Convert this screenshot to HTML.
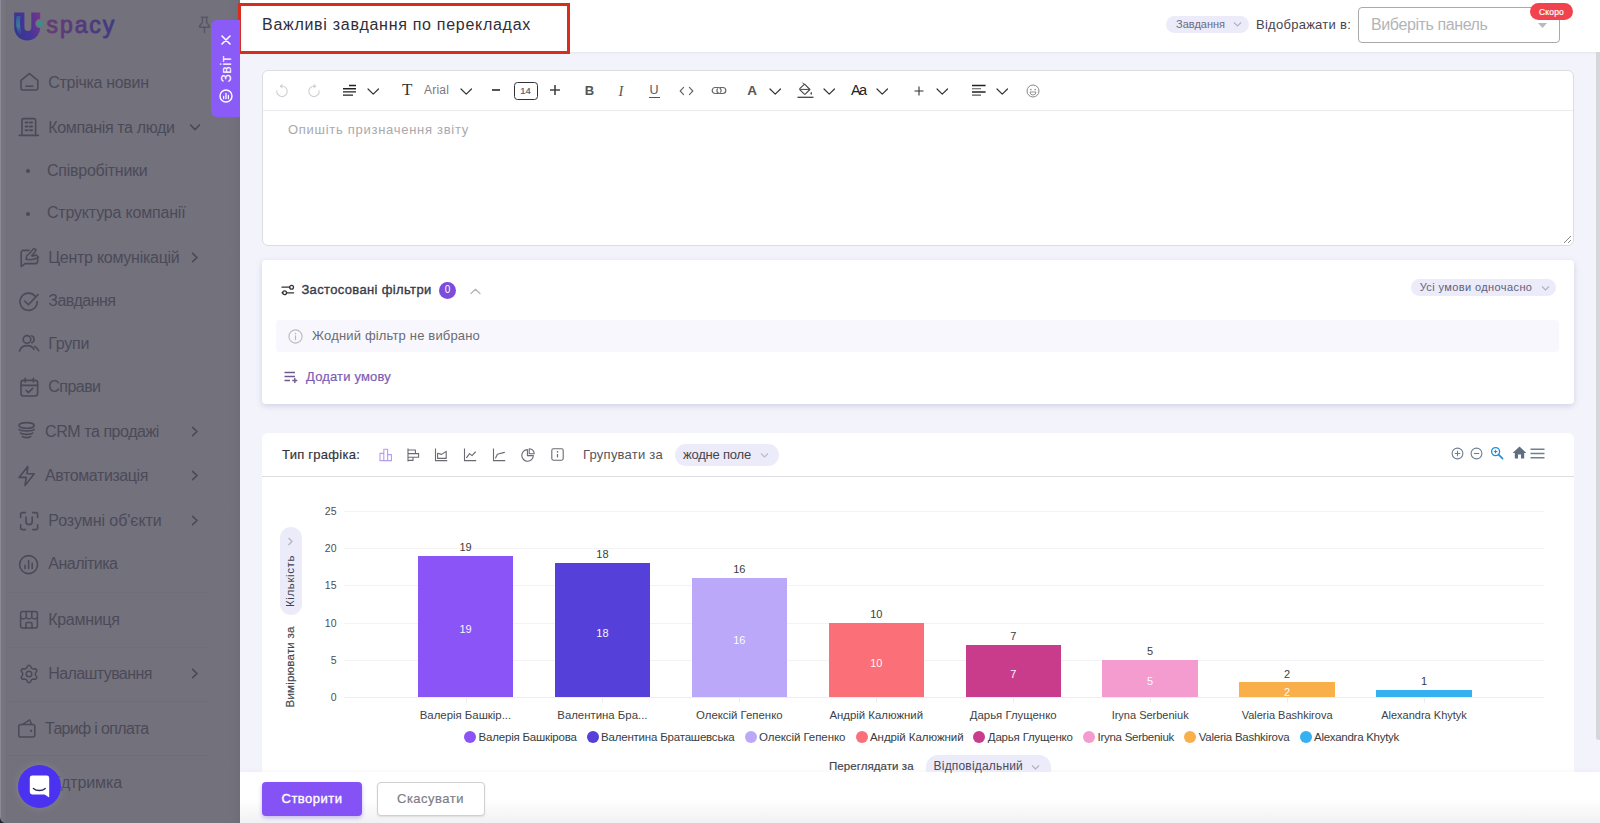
<!DOCTYPE html>
<html lang="uk"><head><meta charset="utf-8"><title>Uspacy</title>
<style>
html,body{margin:0;padding:0;}
body{width:1600px;height:823px;overflow:hidden;position:relative;background:#f3f4fb;font-family:"Liberation Sans",sans-serif;}
.b{position:absolute;box-sizing:border-box;}
.t{position:absolute;white-space:nowrap;}
</style></head><body>
<div class="b" style="left:240px;top:0px;width:1360px;height:52px;background:#fff;box-shadow:0 1px 2px rgba(120,120,150,.12);"></div>
<div class="b" style="left:1595.5px;top:52px;width:6px;height:688px;background:#d6d6da;border-radius:0 0 0 3px;"></div>
<div class="b" style="left:262px;top:70px;width:1312px;height:176px;background:#fff;border:1px solid #dcdde3;border-radius:6px;"></div>
<div class="b" style="left:263px;top:110px;width:1310px;height:1px;background:#ececf0;"></div>
<div class="b" style="left:262px;top:260px;width:1312px;height:144px;background:#fff;border-radius:4px;box-shadow:0 2px 6px rgba(110,110,150,.26);"></div>
<div class="b" style="left:276px;top:320px;width:1283px;height:32px;background:#f7f7fd;border-radius:4px;"></div>
<div class="b" style="left:262px;top:433px;width:1312px;height:360px;background:#fff;border-radius:6px;"></div>
<div class="b" style="left:262px;top:476px;width:1312px;height:1px;background:#dddde2;"></div>
<div class="b" style="left:240px;top:772px;width:1360px;height:51px;background:linear-gradient(#fff 0,#fff 55%,#f1f1f3 100%);box-shadow:0 -1px 4px rgba(100,100,130,.06);"></div>
<div class="b" style="left:0px;top:0px;width:240px;height:823px;background:#73717c;"></div>
<div class="b" style="left:229px;top:0px;width:11px;height:823px;background:linear-gradient(90deg,rgba(60,58,80,0),rgba(60,58,80,.08));"></div>
<div class="b" style="left:9px;top:592px;width:199px;height:1px;background:#6f6d78;"></div>
<div class="b" style="left:9px;top:647px;width:199px;height:1px;background:#6f6d78;"></div>
<div class="b" style="left:9px;top:701px;width:199px;height:1px;background:#6f6d78;"></div>
<div class="b" style="left:9px;top:755px;width:199px;height:1px;background:#6f6d78;"></div>
<div class="t" style="left:48.25px;top:71.50px;font-size:16px;line-height:22px;font-weight:400;color:#4b4a58;letter-spacing:-0.298px;">Стрічка новин</div>
<div class="t" style="left:48.25px;top:116.50px;font-size:16px;line-height:22px;font-weight:400;color:#4b4a58;letter-spacing:-0.361px;">Компанія та люди</div>
<div class="t" style="left:47.00px;top:159.50px;font-size:16px;line-height:22px;font-weight:400;color:#4b4a58;letter-spacing:-0.256px;">Співробітники</div>
<div class="t" style="left:47.00px;top:202.00px;font-size:16px;line-height:22px;font-weight:400;color:#4b4a58;letter-spacing:-0.185px;">Структура компанії</div>
<div class="t" style="left:48.25px;top:247.00px;font-size:16px;line-height:22px;font-weight:400;color:#4b4a58;letter-spacing:-0.268px;">Центр комунікацій</div>
<div class="t" style="left:48.25px;top:290.00px;font-size:16px;line-height:22px;font-weight:400;color:#4b4a58;letter-spacing:-0.525px;">Завдання</div>
<div class="t" style="left:48.25px;top:332.50px;font-size:16px;line-height:22px;font-weight:400;color:#4b4a58;letter-spacing:-0.217px;">Групи</div>
<div class="t" style="left:48.25px;top:375.50px;font-size:16px;line-height:22px;font-weight:400;color:#4b4a58;letter-spacing:-0.534px;">Справи</div>
<div class="t" style="left:45.00px;top:420.50px;font-size:16px;line-height:22px;font-weight:400;color:#4b4a58;letter-spacing:-0.427px;">CRM та продажі</div>
<div class="t" style="left:45.00px;top:465.25px;font-size:16px;line-height:22px;font-weight:400;color:#4b4a58;letter-spacing:-0.407px;">Автоматизація</div>
<div class="t" style="left:48.25px;top:510.00px;font-size:16px;line-height:22px;font-weight:400;color:#4b4a58;letter-spacing:-0.048px;">Розумні об&#x27;єкти</div>
<div class="t" style="left:48.25px;top:553.25px;font-size:16px;line-height:22px;font-weight:400;color:#4b4a58;letter-spacing:-0.507px;">Аналітика</div>
<div class="t" style="left:48.25px;top:609.00px;font-size:16px;line-height:22px;font-weight:400;color:#4b4a58;letter-spacing:-0.309px;">Крамниця</div>
<div class="t" style="left:48.25px;top:663.00px;font-size:16px;line-height:22px;font-weight:400;color:#4b4a58;letter-spacing:-0.591px;">Налаштування</div>
<div class="t" style="left:45.00px;top:717.50px;font-size:16px;line-height:22px;font-weight:400;color:#4b4a58;letter-spacing:-0.671px;">Тариф і оплата</div>
<div class="t" style="left:46.20px;top:772.25px;font-size:16px;line-height:22px;font-weight:400;color:#4b4a58;letter-spacing:-0.112px;">Підтримка</div>
<div class="b" style="left:26px;top:168.5px;width:4px;height:4px;background:#4b4a58;border-radius:50%;"></div>
<div class="b" style="left:26px;top:211.5px;width:4px;height:4px;background:#4b4a58;border-radius:50%;"></div>
<div class="t" style="left:262.00px;top:13.50px;font-size:16px;line-height:22px;font-weight:400;color:#2f2f37;letter-spacing:0.712px;">Важливі завдання по перекладах</div>
<div class="b" style="left:238px;top:3px;width:332px;height:51px;border:3px solid #d62d1c;"></div>
<div class="b" style="left:1165.5px;top:16px;width:83px;height:17px;background:#ecebf9;border-radius:9px;"></div>
<div class="t" style="left:1176.00px;top:17.00px;font-size:11px;line-height:15px;font-weight:400;color:#6a6a86;letter-spacing:-0.016px;">Завдання</div>
<svg class="b" style="left:1233px;top:21px;" width="9" height="7" viewBox="0 0 9 7" fill="none"><path d="M1 1.5 L4.5 5 L8 1.5" stroke="#b0b0c4" stroke-width="1.1"/></svg>
<div class="t" style="left:1256.00px;top:16.00px;font-size:13px;line-height:18px;font-weight:400;color:#45454d;letter-spacing:0.267px;">Відображати в:</div>
<div class="b" style="left:1358px;top:7px;width:201.5px;height:36px;background:#fff;border:1px solid #a9a9ad;border-radius:4px;"></div>
<div class="t" style="left:1371.00px;top:14.40px;font-size:16px;line-height:22px;font-weight:400;color:#b4b4b8;letter-spacing:-0.400px;">Виберіть панель</div>
<svg class="b" style="left:1538px;top:23px;" width="9" height="5" viewBox="0 0 9 5" fill="none"><path d="M0 0 H9 L4.5 5 Z" fill="#b9b9bd"/></svg>
<div class="b" style="left:1530px;top:3px;width:43px;height:17px;background:#f0434d;border-radius:9px;"></div>
<div class="t" style="left:1539.00px;top:5.50px;font-size:8.5px;line-height:12px;font-weight:400;color:#fff;letter-spacing:0.173px;-webkit-text-stroke:0.18px #fff;">Скоро</div>
<div class="b" style="left:211px;top:19.5px;width:29px;height:97.5px;background:#8a5bf6;border-radius:6px 0 0 6px;"></div>
<svg class="b" style="left:221px;top:34.5px;" width="10" height="10" viewBox="0 0 10 10" fill="none"><path d="M1 1 L9 9 M9 1 L1 9" stroke="#fff" stroke-width="1.6" stroke-linecap="round"/></svg>
<div class="t" style="left:226px;top:69px;width:0;height:0;"><div style="position:absolute;transform:translate(-50%,-50%) rotate(-90deg);font-size:14px;line-height:16px;color:#fff;letter-spacing:0.4px;white-space:nowrap;">Звіт</div></div>
<svg class="b" style="left:219px;top:88.5px;" width="14" height="14" viewBox="0 0 14 14" fill="none"><circle cx="7" cy="7" r="6" stroke="#fff" stroke-width="1.4"/><path d="M4.6 9.5 V7.5 M7 9.5 V4.5 M9.4 9.5 V6.3" stroke="#fff" stroke-width="1.3" stroke-linecap="round"/></svg>
<svg class="b" style="left:275px;top:83px;" width="14" height="15" viewBox="0 0 14 15" fill="none"><path d="M7 3.2 A5.2 5.2 0 1 1 1.9 7.4" stroke="#cfcfd3" stroke-width="1.1" fill="none"/><path d="M7.3 0.8 L4.6 3.2 L7.3 5.6 Z" fill="#cfcfd3"/></svg>
<svg class="b" style="left:307px;top:83px;" width="14" height="15" viewBox="0 0 14 15" fill="none"><path d="M7 3.2 A5.2 5.2 0 1 0 12.1 7.4" stroke="#cfcfd3" stroke-width="1.1" fill="none"/><path d="M6.7 0.8 L9.4 3.2 L6.7 5.6 Z" fill="#cfcfd3"/></svg>
<svg class="b" style="left:343px;top:84px;" width="14" height="13" viewBox="0 0 14 13" fill="none"><path d="M6 1.5 H13 M0 4.7 H13 M0 7.9 H13 M0 11.1 H10" stroke="#222" stroke-width="1.4"/></svg>
<svg class="b" style="left:367.25px;top:88.4px;" width="12.5" height="7.2" viewBox="0 0 12.5 7.2" fill="none"><path d="M1 1 L6.25 6.2 L11.5 1" stroke="#333" stroke-width="1.2" stroke-linecap="round" stroke-linejoin="round"/></svg>
<div class="t" style="left:402.00px;top:78.30px;font-size:17px;line-height:24px;font-weight:400;color:#333;letter-spacing:0.000px;font-family:'Liberation Serif',serif;">T</div>
<div class="t" style="left:424.00px;top:82.00px;font-size:12px;line-height:17px;font-weight:400;color:#7a7a80;letter-spacing:0.199px;">Arial</div>
<svg class="b" style="left:460.25px;top:88.4px;" width="12.5" height="7.2" viewBox="0 0 12.5 7.2" fill="none"><path d="M1 1 L6.25 6.2 L11.5 1" stroke="#333" stroke-width="1.2" stroke-linecap="round" stroke-linejoin="round"/></svg>
<div class="b" style="left:492px;top:89.2px;width:7.5px;height:1.6px;background:#555;"></div>
<div class="b" style="left:513.5px;top:81.5px;width:24px;height:18px;border:1.6px solid #333;border-radius:3.5px;"></div>
<div class="t" style="left:520.22px;top:84.00px;font-size:9.5px;line-height:13px;font-weight:400;color:#5c5c62;letter-spacing:0.000px;-webkit-text-stroke:0.18px #5c5c62;">14</div>
<svg class="b" style="left:550px;top:85px;" width="10" height="10" viewBox="0 0 10 10" fill="none"><path d="M5 0 V10 M0 5 H10" stroke="#444" stroke-width="1.6"/></svg>
<div class="t" style="left:584.81px;top:81.50px;font-size:13px;line-height:18px;font-weight:700;color:#555;letter-spacing:0.000px;">B</div>
<div class="t" style="left:618.50px;top:80.50px;font-size:14.5px;line-height:20px;font-weight:400;color:#555;letter-spacing:0.000px;font-family:'Liberation Serif',serif;font-style:italic;">I</div>
<div class="t" style="left:649.49px;top:81.30px;font-size:12.5px;line-height:18px;font-weight:400;color:#555;letter-spacing:0.000px;">U</div>
<div class="b" style="left:648.5px;top:96.6px;width:11px;height:1.2px;background:#555;"></div>
<svg class="b" style="left:679px;top:84.5px;" width="15" height="12" viewBox="0 0 15 12" fill="none"><path d="M4.6 2.3 L1.2 6 L4.6 9.7 M10.4 2.3 L13.8 6 L10.4 9.7" stroke="#666" stroke-width="1.15" stroke-linecap="round" stroke-linejoin="round"/></svg>
<svg class="b" style="left:711px;top:86px;" width="16" height="9" viewBox="0 0 16 9" fill="none"><path d="M7 7.5 H4.2 A3 3 0 0 1 4.2 1.5 H7.2 A3 3 0 0 1 9.6 6.2" stroke="#666" stroke-width="1.2" stroke-linecap="round"/><path d="M9 1.5 H11.8 A3 3 0 0 1 11.8 7.5 H8.8 A3 3 0 0 1 6.4 2.8" stroke="#666" stroke-width="1.2" stroke-linecap="round"/></svg>
<div class="t" style="left:747.13px;top:81.00px;font-size:13.5px;line-height:19px;font-weight:700;color:#555;letter-spacing:0.000px;">A</div>
<svg class="b" style="left:768.75px;top:88.4px;" width="12.5" height="7.2" viewBox="0 0 12.5 7.2" fill="none"><path d="M1 1 L6.25 6.2 L11.5 1" stroke="#333" stroke-width="1.2" stroke-linecap="round" stroke-linejoin="round"/></svg>
<svg class="b" style="left:796.5px;top:82px;" width="18" height="17" viewBox="0 0 18 17" fill="none"><path d="M7.6 2.2 L12.9 7.5 L8.5 11.9 A1 1 0 0 1 7.1 11.9 L3 7.8 A1 1 0 0 1 3 6.4 Z" stroke="#444" stroke-width="1.1" stroke-linejoin="round"/><path d="M5.4 0.6 L7.6 2.8 M3.2 7.4 H12.6" stroke="#444" stroke-width="1"/><path d="M14.2 9.8 Q15.8 12.2 14.2 12.8 Q12.6 12.2 14.2 9.8Z" fill="#444"/><path d="M0.5 15.3 H16.5" stroke="#444" stroke-width="1.3"/></svg>
<svg class="b" style="left:822.75px;top:88.4px;" width="12.5" height="7.2" viewBox="0 0 12.5 7.2" fill="none"><path d="M1 1 L6.25 6.2 L11.5 1" stroke="#333" stroke-width="1.2" stroke-linecap="round" stroke-linejoin="round"/></svg>
<div class="t" style="left:851.00px;top:80.20px;font-size:14.5px;line-height:20px;font-weight:400;color:#222;letter-spacing:-1.618px;">Aa</div>
<svg class="b" style="left:876.25px;top:88.4px;" width="12.5" height="7.2" viewBox="0 0 12.5 7.2" fill="none"><path d="M1 1 L6.25 6.2 L11.5 1" stroke="#333" stroke-width="1.2" stroke-linecap="round" stroke-linejoin="round"/></svg>
<svg class="b" style="left:914px;top:85.5px;" width="10" height="10" viewBox="0 0 10 10" fill="none"><path d="M5 0.5 V9.5 M0.5 5 H9.5" stroke="#333" stroke-width="1.1"/></svg>
<svg class="b" style="left:936.25px;top:88.4px;" width="12.5" height="7.2" viewBox="0 0 12.5 7.2" fill="none"><path d="M1 1 L6.25 6.2 L11.5 1" stroke="#333" stroke-width="1.2" stroke-linecap="round" stroke-linejoin="round"/></svg>
<svg class="b" style="left:972px;top:84px;" width="14" height="13" viewBox="0 0 14 13" fill="none"><path d="M0 1.5 H13.6 M0 7.9 H13.6" stroke="#222" stroke-width="1.5"/><path d="M0 4.7 H9 M0 11.1 H9" stroke="#555" stroke-width="1.1"/></svg>
<svg class="b" style="left:996.25px;top:88.4px;" width="12.5" height="7.2" viewBox="0 0 12.5 7.2" fill="none"><path d="M1 1 L6.25 6.2 L11.5 1" stroke="#333" stroke-width="1.2" stroke-linecap="round" stroke-linejoin="round"/></svg>
<svg class="b" style="left:1026px;top:83.5px;" width="14" height="14" viewBox="0 0 14 14" fill="none"><circle cx="7" cy="7" r="6" stroke="#888" stroke-width="1"/><circle cx="4.9" cy="5.6" r=".8" fill="#888"/><circle cx="9.1" cy="5.6" r=".8" fill="#888"/><path d="M4 8 H10 A3 3 0 0 1 4 8 Z" stroke="#888" stroke-width=".9"/></svg>
<div class="t" style="left:288.00px;top:121.00px;font-size:13px;line-height:18px;font-weight:400;color:#a9a9ad;letter-spacing:0.718px;">Опишіть призначення звіту</div>
<svg class="b" style="left:1562px;top:234px;" width="10" height="10" viewBox="0 0 10 10" fill="none"><path d="M9 2 L2 9 M9 6 L6 9" stroke="#888" stroke-width="1"/></svg>
<svg class="b" style="left:280.5px;top:284px;" width="14" height="12" viewBox="0 0 14 12" fill="none"><path d="M1 3.2 H8.6 M1 8.8 H2 M6 8.8 H12.6" stroke="#333" stroke-width="1.3" stroke-linecap="round"/><circle cx="10.6" cy="3.2" r="1.9" stroke="#333" stroke-width="1.3"/><circle cx="3.6" cy="8.8" r="1.9" stroke="#333" stroke-width="1.3"/></svg>
<div class="t" style="left:301.40px;top:281.00px;font-size:13px;line-height:18px;font-weight:400;color:#3a3a44;letter-spacing:0.351px;-webkit-text-stroke:0.36px #3a3a44;">Застосовані фільтри</div>
<div class="b" style="left:439px;top:281.5px;width:17px;height:17px;background:#7c4ddb;border-radius:50%;"></div>
<div class="t" style="left:444.72px;top:283.00px;font-size:10px;line-height:14px;font-weight:400;color:#fff;letter-spacing:0.000px;">0</div>
<svg class="b" style="left:470px;top:287.5px;" width="11" height="7" viewBox="0 0 11 7" fill="none"><path d="M1 5.5 L5.5 1.2 L10 5.5" stroke="#b4b4bc" stroke-width="1.2" stroke-linecap="round" stroke-linejoin="round"/></svg>
<div class="b" style="left:1411px;top:279px;width:144.5px;height:17px;background:#ecebf9;border-radius:9px;"></div>
<div class="t" style="left:1419.70px;top:280.00px;font-size:11px;line-height:15px;font-weight:400;color:#5f5f78;letter-spacing:0.398px;">Усі умови одночасно</div>
<svg class="b" style="left:1541px;top:284.5px;" width="9" height="7" viewBox="0 0 9 7" fill="none"><path d="M1 1.5 L4.5 5 L8 1.5" stroke="#b0b0c4" stroke-width="1.1"/></svg>
<svg class="b" style="left:287.5px;top:328.5px;" width="15" height="15" viewBox="0 0 15 15" fill="none"><circle cx="7.5" cy="7.5" r="6.6" stroke="#b9b9c4" stroke-width="1.1"/><path d="M7.5 6.8 V10.6" stroke="#b9b9c4" stroke-width="1.2" stroke-linecap="round"/><circle cx="7.5" cy="4.6" r=".8" fill="#b9b9c4"/></svg>
<div class="t" style="left:312.00px;top:327.00px;font-size:13px;line-height:18px;font-weight:400;color:#6b6b72;letter-spacing:0.170px;">Жодний фільтр не вибрано</div>
<svg class="b" style="left:284px;top:371px;" width="14" height="12" viewBox="0 0 14 12" fill="none"><path d="M0.5 1.5 H11 M0.5 5.5 H11 M0.5 9.5 H6" stroke="#6f5a8c" stroke-width="1.5"/><path d="M10.8 7 V12 M8.3 9.5 H13.3" stroke="#6f5a8c" stroke-width="1.4"/></svg>
<div class="t" style="left:306.00px;top:368.00px;font-size:13px;line-height:18px;font-weight:400;color:#7b5cb4;letter-spacing:0.175px;-webkit-text-stroke:0.18px #7b5cb4;">Додати умову</div>
<div class="t" style="left:282.00px;top:446.00px;font-size:13px;line-height:18px;font-weight:400;color:#34343c;letter-spacing:0.260px;-webkit-text-stroke:0.18px #34343c;">Тип графіка:</div>
<svg class="b" style="left:378.5px;top:447.5px;" width="14" height="14" viewBox="0 0 14 14" fill="none"><path d="M1 12.6 V5.4 H4.8 V12.6 M4.8 12.6 V1.2 H8.6 V12.6 M8.6 12.6 V6.6 H12.4 V12.6 M0.4 12.6 H13" stroke="#b59cf0" stroke-width="1.1" stroke-linejoin="round"/></svg>
<svg class="b" style="left:405.5px;top:447.5px;" width="14" height="14" viewBox="0 0 14 14" fill="none"><path d="M2 0.5 V13.5 M2 2 H9.4 V5.6 H2 M2 5.6 H12.6 V9.2 H2 M2 9.2 H7 V12.4 H2" stroke="#6a6a72" stroke-width="1.1" stroke-linejoin="round"/></svg>
<svg class="b" style="left:434px;top:447.5px;" width="14" height="14" viewBox="0 0 14 14" fill="none"><path d="M1.5 0.5 V12.6 H13.2" stroke="#6a6a72" stroke-width="1.1"/><path d="M3.6 10.4 V5.2 L7.6 6.4 L12.2 3.4 V10.4 Z" stroke="#6a6a72" stroke-width="1.1" stroke-linejoin="round"/></svg>
<svg class="b" style="left:462.5px;top:447.5px;" width="14" height="14" viewBox="0 0 14 14" fill="none"><path d="M1.5 0.5 V12.6 H13.2" stroke="#6a6a72" stroke-width="1.1"/><path d="M3.6 9.6 L6.6 5.6 L9 7.6 L12.4 4" stroke="#6a6a72" stroke-width="1.1" stroke-linejoin="round" stroke-linecap="round"/></svg>
<svg class="b" style="left:491.5px;top:447.5px;" width="14" height="14" viewBox="0 0 14 14" fill="none"><path d="M1.5 0.5 V12.6 H13.2" stroke="#6a6a72" stroke-width="1.1"/><path d="M3.6 10 L5.4 6.2 L12.4 4.4" stroke="#6a6a72" stroke-width="1.1" stroke-linejoin="round" stroke-linecap="round"/></svg>
<svg class="b" style="left:521px;top:447.5px;" width="14" height="14" viewBox="0 0 14 14" fill="none"><path d="M6.4 1.6 A5.8 5.8 0 1 0 12.4 7.6 H6.4 Z" stroke="#6a6a72" stroke-width="1.1" stroke-linejoin="round"/><path d="M8.2 0.8 A5.4 5.4 0 0 1 13.2 5.8 H8.2 Z" stroke="#6a6a72" stroke-width="1.1" stroke-linejoin="round"/></svg>
<svg class="b" style="left:551px;top:448px;" width="13" height="13" viewBox="0 0 13 13" fill="none"><rect x="0.8" y="0.8" width="11.4" height="11.4" rx="1.6" stroke="#6a6a72" stroke-width="1.1"/><path d="M6.5 6 V9.4" stroke="#6a6a72" stroke-width="1.2"/><circle cx="6.5" cy="3.9" r=".8" fill="#6a6a72"/></svg>
<div class="t" style="left:583.00px;top:446.00px;font-size:13px;line-height:18px;font-weight:400;color:#55555c;letter-spacing:0.237px;">Групувати за</div>
<div class="b" style="left:674.5px;top:443.5px;width:104.5px;height:22px;background:#ecebf9;border-radius:11px;"></div>
<div class="t" style="left:683.00px;top:445.50px;font-size:13px;line-height:18px;font-weight:400;color:#44444e;letter-spacing:-0.205px;">жодне поле</div>
<svg class="b" style="left:759.5px;top:451.5px;" width="9" height="7" viewBox="0 0 9 7" fill="none"><path d="M1 1.5 L4.5 5 L8 1.5" stroke="#b9b9c8" stroke-width="1.1"/></svg>
<svg class="b" style="left:1451px;top:446.9px;" width="13" height="13" viewBox="0 0 13 13" fill="none"><circle cx="6.5" cy="6.5" r="5.4" stroke="#6e8192" stroke-width="1.1"/><path d="M6.5 3.8 V9.2 M3.8 6.5 H9.2" stroke="#6e8192" stroke-width="1.1"/></svg>
<svg class="b" style="left:1469.5px;top:446.9px;" width="13" height="13" viewBox="0 0 13 13" fill="none"><circle cx="6.5" cy="6.5" r="5.4" stroke="#6e8192" stroke-width="1.1"/><path d="M3.8 6.5 H9.2" stroke="#6e8192" stroke-width="1.1"/></svg>
<svg class="b" style="left:1489.5px;top:446px;" width="14" height="14" viewBox="0 0 14 14" fill="none"><circle cx="5.6" cy="5.6" r="4" stroke="#1a90d2" stroke-width="1.3"/><path d="M8.6 8.6 L12.6 12.6" stroke="#1a90d2" stroke-width="1.6" stroke-linecap="round"/><path d="M5.6 3.8 V7.4 M3.8 5.6 H7.4" stroke="#0f8fd6" stroke-width="1"/></svg>
<svg class="b" style="left:1511.5px;top:446.4px;" width="15" height="13" viewBox="0 0 15 13" fill="none"><path d="M7.5 0.6 L0.6 7 H2.8 V12.4 H6 V8.6 H9 V12.4 H12.2 V7 H14.4 Z" fill="#5e7080"/></svg>
<svg class="b" style="left:1530px;top:448px;" width="15" height="11" viewBox="0 0 15 11" fill="none"><path d="M0.5 1.2 H14.5 M0.5 5.5 H14.5 M0.5 9.8 H14.5" stroke="#6e8192" stroke-width="1.5"/></svg>
<div class="b" style="left:344px;top:697px;width:1200px;height:1px;background:#ededf1;"></div>
<div class="t" style="left:330.66px;top:690.30px;font-size:10.5px;line-height:15px;font-weight:400;color:#4a4e52;letter-spacing:0.000px;">0</div>
<div class="b" style="left:344px;top:660px;width:1200px;height:1px;background:#f3f3f6;"></div>
<div class="t" style="left:330.66px;top:653.00px;font-size:10.5px;line-height:15px;font-weight:400;color:#4a4e52;letter-spacing:0.000px;">5</div>
<div class="b" style="left:344px;top:623px;width:1200px;height:1px;background:#f3f3f6;"></div>
<div class="t" style="left:324.82px;top:615.70px;font-size:10.5px;line-height:15px;font-weight:400;color:#4a4e52;letter-spacing:0.000px;">10</div>
<div class="b" style="left:344px;top:585px;width:1200px;height:1px;background:#f3f3f6;"></div>
<div class="t" style="left:324.82px;top:578.40px;font-size:10.5px;line-height:15px;font-weight:400;color:#4a4e52;letter-spacing:0.000px;">15</div>
<div class="b" style="left:344px;top:548px;width:1200px;height:1px;background:#f3f3f6;"></div>
<div class="t" style="left:324.82px;top:541.10px;font-size:10.5px;line-height:15px;font-weight:400;color:#4a4e52;letter-spacing:0.000px;">20</div>
<div class="b" style="left:344px;top:511px;width:1200px;height:1px;background:#f3f3f6;"></div>
<div class="t" style="left:324.82px;top:503.80px;font-size:10.5px;line-height:15px;font-weight:400;color:#4a4e52;letter-spacing:0.000px;">25</div>
<div class="b" style="left:417.8px;top:555.6px;width:95.5px;height:141.7px;background:#8b54f7;"></div>
<div class="b" style="left:466px;top:698px;width:1px;height:5px;background:#ededf1;"></div>
<div class="t" style="left:459.38px;top:539.86px;font-size:11px;line-height:15px;font-weight:400;color:#373d3f;letter-spacing:0.000px;">19</div>
<div class="t" style="left:459.38px;top:621.93px;font-size:11px;line-height:15px;font-weight:400;color:#fff;letter-spacing:0.000px;opacity:.95;">19</div>
<div class="t" style="left:419.76px;top:707.30px;font-size:11.4px;line-height:16px;font-weight:400;color:#3d4245;letter-spacing:0.000px;">Валерія Башкір...</div>
<div class="b" style="left:554.7px;top:563.0px;width:95.5px;height:134.3px;background:#5540d9;"></div>
<div class="b" style="left:602px;top:698px;width:1px;height:5px;background:#ededf1;"></div>
<div class="t" style="left:596.31px;top:547.32px;font-size:11px;line-height:15px;font-weight:400;color:#373d3f;letter-spacing:0.000px;">18</div>
<div class="t" style="left:596.31px;top:625.66px;font-size:11px;line-height:15px;font-weight:400;color:#fff;letter-spacing:0.000px;opacity:.95;">18</div>
<div class="t" style="left:557.29px;top:707.30px;font-size:11.4px;line-height:16px;font-weight:400;color:#3d4245;letter-spacing:0.000px;">Валентина Бра...</div>
<div class="b" style="left:691.6px;top:577.9px;width:95.5px;height:119.4px;background:#bba8f9;"></div>
<div class="b" style="left:739px;top:698px;width:1px;height:5px;background:#ededf1;"></div>
<div class="t" style="left:733.24px;top:562.24px;font-size:11px;line-height:15px;font-weight:400;color:#373d3f;letter-spacing:0.000px;">16</div>
<div class="t" style="left:733.24px;top:633.12px;font-size:11px;line-height:15px;font-weight:400;color:#fff;letter-spacing:0.000px;opacity:.95;">16</div>
<div class="t" style="left:696.04px;top:707.30px;font-size:11.4px;line-height:16px;font-weight:400;color:#3d4245;letter-spacing:0.000px;">Олексій Гепенко</div>
<div class="b" style="left:828.5px;top:622.7px;width:95.5px;height:74.6px;background:#fb7078;"></div>
<div class="b" style="left:876px;top:698px;width:1px;height:5px;background:#ededf1;"></div>
<div class="t" style="left:870.17px;top:607.00px;font-size:11px;line-height:15px;font-weight:400;color:#373d3f;letter-spacing:0.000px;">10</div>
<div class="t" style="left:870.17px;top:655.50px;font-size:11px;line-height:15px;font-weight:400;color:#fff;letter-spacing:0.000px;opacity:.95;">10</div>
<div class="t" style="left:829.45px;top:707.30px;font-size:11.4px;line-height:16px;font-weight:400;color:#3d4245;letter-spacing:0.000px;">Андрій Калюжний</div>
<div class="b" style="left:965.5px;top:645.1px;width:95.5px;height:52.2px;background:#c93c8c;"></div>
<div class="b" style="left:1013px;top:698px;width:1px;height:5px;background:#ededf1;"></div>
<div class="t" style="left:1010.16px;top:629.38px;font-size:11px;line-height:15px;font-weight:400;color:#373d3f;letter-spacing:0.000px;">7</div>
<div class="t" style="left:1010.16px;top:666.69px;font-size:11px;line-height:15px;font-weight:400;color:#fff;letter-spacing:0.000px;opacity:.95;">7</div>
<div class="t" style="left:969.77px;top:707.30px;font-size:11.4px;line-height:16px;font-weight:400;color:#3d4245;letter-spacing:0.000px;">Дарья Глущенко</div>
<div class="b" style="left:1102.4px;top:660.0px;width:95.5px;height:37.3px;background:#f49bcf;"></div>
<div class="b" style="left:1150px;top:698px;width:1px;height:5px;background:#ededf1;"></div>
<div class="t" style="left:1147.09px;top:644.30px;font-size:11px;line-height:15px;font-weight:400;color:#373d3f;letter-spacing:0.000px;">5</div>
<div class="t" style="left:1147.09px;top:674.15px;font-size:11px;line-height:15px;font-weight:400;color:#fff;letter-spacing:0.000px;opacity:.95;">5</div>
<div class="t" style="left:1111.63px;top:707.80px;font-size:11px;line-height:15px;font-weight:400;color:#3d4245;letter-spacing:0.000px;">Iryna Serbeniuk</div>
<div class="b" style="left:1239.3px;top:682.4px;width:95.5px;height:14.9px;background:#f9b04b;"></div>
<div class="b" style="left:1287px;top:698px;width:1px;height:5px;background:#ededf1;"></div>
<div class="t" style="left:1284.02px;top:666.68px;font-size:11px;line-height:15px;font-weight:400;color:#373d3f;letter-spacing:0.000px;">2</div>
<div class="t" style="left:1284.02px;top:685.34px;font-size:11px;line-height:15px;font-weight:400;color:#fff;letter-spacing:0.000px;opacity:.95;">2</div>
<div class="t" style="left:1241.63px;top:707.80px;font-size:11px;line-height:15px;font-weight:400;color:#3d4245;letter-spacing:0.000px;">Valeria Bashkirova</div>
<div class="b" style="left:1376.3px;top:689.8px;width:95.5px;height:7.5px;background:#35b0f0;"></div>
<div class="b" style="left:1424px;top:698px;width:1px;height:5px;background:#ededf1;"></div>
<div class="t" style="left:1420.95px;top:674.14px;font-size:11px;line-height:15px;font-weight:400;color:#373d3f;letter-spacing:0.000px;">1</div>
<div class="t" style="left:1381.21px;top:707.80px;font-size:11px;line-height:15px;font-weight:400;color:#3d4245;letter-spacing:0.000px;">Alexandra Khytyk</div>
<div class="b" style="left:463.8px;top:730.5px;width:12px;height:12px;background:#8b54f7;border-radius:50%;"></div>
<div class="t" style="left:478.60px;top:728.70px;font-size:11.5px;line-height:16px;font-weight:400;color:#373d3f;letter-spacing:-0.204px;">Валерія Башкірова</div>
<div class="b" style="left:587px;top:730.5px;width:12px;height:12px;background:#5540d9;border-radius:50%;"></div>
<div class="t" style="left:601.00px;top:728.70px;font-size:11.5px;line-height:16px;font-weight:400;color:#373d3f;letter-spacing:-0.195px;">Валентина Браташевська</div>
<div class="b" style="left:744.8px;top:730.5px;width:12px;height:12px;background:#bba8f9;border-radius:50%;"></div>
<div class="t" style="left:759.00px;top:728.70px;font-size:11.5px;line-height:16px;font-weight:400;color:#373d3f;letter-spacing:-0.066px;">Олексій Гепенко</div>
<div class="b" style="left:855.8px;top:730.5px;width:12px;height:12px;background:#fb7078;border-radius:50%;"></div>
<div class="t" style="left:870.00px;top:728.70px;font-size:11.5px;line-height:16px;font-weight:400;color:#373d3f;letter-spacing:-0.066px;">Андрій Калюжний</div>
<div class="b" style="left:973.4px;top:730.5px;width:12px;height:12px;background:#c93c8c;border-radius:50%;"></div>
<div class="t" style="left:987.80px;top:728.70px;font-size:11.5px;line-height:16px;font-weight:400;color:#373d3f;letter-spacing:-0.191px;">Дарья Глущенко</div>
<div class="b" style="left:1083px;top:730.5px;width:12px;height:12px;background:#f49bcf;border-radius:50%;"></div>
<div class="t" style="left:1097.50px;top:728.70px;font-size:11.5px;line-height:16px;font-weight:400;color:#373d3f;letter-spacing:-0.270px;">Iryna Serbeniuk</div>
<div class="b" style="left:1184px;top:730.5px;width:12px;height:12px;background:#f9b04b;border-radius:50%;"></div>
<div class="t" style="left:1198.80px;top:728.70px;font-size:11.5px;line-height:16px;font-weight:400;color:#373d3f;letter-spacing:-0.252px;">Valeria Bashkirova</div>
<div class="b" style="left:1299.6px;top:730.5px;width:12px;height:12px;background:#35b0f0;border-radius:50%;"></div>
<div class="t" style="left:1314.00px;top:728.70px;font-size:11.5px;line-height:16px;font-weight:400;color:#373d3f;letter-spacing:-0.281px;">Alexandra Khytyk</div>
<div class="t" style="left:829.00px;top:758.00px;font-size:11.5px;line-height:16px;font-weight:400;color:#45454d;letter-spacing:0.061px;-webkit-text-stroke:0.18px #45454d;">Переглядати за</div>
<div class="b" style="left:926px;top:755px;width:124.5px;height:17px;background:#ecebf9;border-radius:12px 12px 0 0;"></div>
<div class="t" style="left:933.60px;top:758.10px;font-size:12px;line-height:17px;font-weight:400;color:#4a4a60;letter-spacing:0.182px;">Відповідальний</div>
<svg class="b" style="left:1031px;top:763.5px;" width="9" height="7" viewBox="0 0 9 7" fill="none"><path d="M1 1.5 L4.5 5 L8 1.5" stroke="#b0b0c4" stroke-width="1.1"/></svg>
<div class="b" style="left:279.5px;top:527px;width:22px;height:88px;background:#ecebf9;border-radius:11px;"></div>
<svg class="b" style="left:287px;top:536.5px;" width="7" height="9" viewBox="0 0 7 9" fill="none"><path d="M1.5 1 L5 4.5 L1.5 8" stroke="#b4b4c2" stroke-width="1.3"/></svg>
<div class="t" style="left:290.4px;top:581px;width:0;height:0;"><div style="position:absolute;transform:translate(-50%,-50%) rotate(-90deg);font-size:11.5px;line-height:14.5px;color:#40404e;letter-spacing:0.605px;white-space:nowrap;">Кількість</div></div>
<div class="t" style="left:290.4px;top:666.5px;width:0;height:0;"><div style="position:absolute;transform:translate(-50%,-50%) rotate(-90deg);font-size:11.5px;line-height:14.5px;color:#45454d;letter-spacing:0.211px;-webkit-text-stroke:0.18px #45454d;white-space:nowrap;">Вимірювати за</div></div>
<div class="b" style="left:262px;top:782px;width:100px;height:34px;background:#8452f5;border-radius:4px;box-shadow:0 2px 4px rgba(110,70,220,.35);"></div>
<div class="t" style="left:281.50px;top:790.00px;font-size:13px;line-height:18px;font-weight:400;color:#fff;letter-spacing:0.495px;-webkit-text-stroke:0.36px #fff;">Створити</div>
<div class="b" style="left:376.5px;top:782px;width:108px;height:34px;background:#fff;border:1px solid #cfcfd4;border-radius:4px;box-shadow:0 1px 2px rgba(0,0,0,.10);"></div>
<div class="t" style="left:397.00px;top:790.00px;font-size:13px;line-height:18px;font-weight:400;color:#7d7d84;letter-spacing:0.499px;-webkit-text-stroke:0.18px #7d7d84;">Скасувати</div>
<svg class="b" style="left:18.5px;top:72px;" width="21" height="20" viewBox="0 0 21 20" fill="none"><g stroke="#4b4a58" stroke-width="1.6" stroke-linecap="round" stroke-linejoin="round"><path d="M2 8.4 L10.4 1.6 L18.8 8.4 V16 A2 2 0 0 1 16.8 18 H4 A2 2 0 0 1 2 16 Z"/><path d="M7 14.2 H13.8"/></g></svg>
<svg class="b" style="left:18px;top:117px;" width="22" height="20" viewBox="0 0 22 20" fill="none"><g stroke="#4b4a58" stroke-width="1.6" stroke-linecap="round" stroke-linejoin="round"><path d="M4 18.2 V3 A1.4 1.4 0 0 1 5.4 1.6 H16.2 A1.4 1.4 0 0 1 17.6 3 V18.2 M1.2 18.4 H20.4"/><path d="M7.6 5.6 H9.6 M12 5.6 H14 M7.6 9.4 H9.6 M12 9.4 H14 M7.6 13.2 H9.6 M12 13.2 H14" stroke-width="2"/></g></svg>
<svg class="b" style="left:18.5px;top:247px;" width="22" height="22" viewBox="0 0 22 22" fill="none"><g stroke="#4b4a58" stroke-width="1.6" stroke-linecap="round" stroke-linejoin="round"><path d="M10 3.4 H4.2 A2 2 0 0 0 2.2 5.4 V19.6 L6 16.6 H16.6 A2 2 0 0 0 18.6 14.6 V11.4"/><path d="M14.6 1.6 C12.4 4.4 9.6 7.6 7.8 8.6 L7 12.2 C11 13 16.4 12.4 19.6 10.2 L17.2 8 C15.6 8.8 14 9 12.6 8.8 C14.6 7.2 16.2 5.2 17.2 2.6 Z" stroke-width="1.5"/></g></svg>
<svg class="b" style="left:18px;top:290.5px;" width="22" height="21" viewBox="0 0 22 21" fill="none"><g stroke="#4b4a58" stroke-width="1.6" stroke-linecap="round" stroke-linejoin="round"><path d="M17.2 5.2 A8.6 8.6 0 1 0 19.2 10.6"/><path d="M6.6 10 L10.4 13.8 L20 3.6"/></g></svg>
<svg class="b" style="left:18px;top:334px;" width="22" height="19" viewBox="0 0 22 19" fill="none"><g stroke="#4b4a58" stroke-width="1.6" stroke-linecap="round" stroke-linejoin="round"><circle cx="9" cy="5.4" r="3.8"/><path d="M1.6 17 C3 12.6 6.4 11.6 9 11.6 C11.6 11.6 14.6 12.6 16 15.4"/><path d="M13.6 1.8 A3.8 3.8 0 0 1 14 8.8 M16.6 12.4 C18.4 13.2 19.8 14.6 20.6 16.8"/></g></svg>
<svg class="b" style="left:18.5px;top:377px;" width="21" height="21" viewBox="0 0 21 21" fill="none"><g stroke="#4b4a58" stroke-width="1.6" stroke-linecap="round" stroke-linejoin="round"><rect x="2" y="3.4" width="16.6" height="15.6" rx="2.4"/><path d="M2 8.4 H18.6 M6.2 1.4 V5 M14.4 1.4 V5"/><path d="M7.2 13.4 L9.4 15.6 L13.6 11.4"/></g></svg>
<svg class="b" style="left:17px;top:421px;" width="20" height="20" viewBox="0 0 20 20" fill="none"><g stroke="#4b4a58" stroke-width="1.6" stroke-linecap="round" stroke-linejoin="round"><ellipse cx="9.6" cy="4.4" rx="7.6" ry="2.8"/><path d="M2 8.4 C3 10.4 16.2 10.4 17.2 8.4 M3.6 12 C5 13.8 14.2 13.8 15.6 12 M5.4 15.6 C6.6 17 12.6 17 13.8 15.6"/></g></svg>
<svg class="b" style="left:17px;top:465px;" width="20" height="22" viewBox="0 0 20 22" fill="none"><g stroke="#4b4a58" stroke-width="1.6" stroke-linecap="round" stroke-linejoin="round"><path d="M10.8 1.6 L2 12.4 H9.2 L8 20.4 L17.2 8.8 H10 Z"/></g></svg>
<svg class="b" style="left:18.5px;top:511px;" width="21" height="21" viewBox="0 0 21 21" fill="none"><g stroke="#4b4a58" stroke-width="1.6" stroke-linecap="round" stroke-linejoin="round"><path d="M1.6 6.4 V3.4 A1.8 1.8 0 0 1 3.4 1.6 H6.4 M13.8 1.6 H16.8 A1.8 1.8 0 0 1 18.6 3.4 V6.4 M18.6 13.8 V16.8 A1.8 1.8 0 0 1 16.8 18.6 H13.8 M6.4 18.6 H3.4 A1.8 1.8 0 0 1 1.6 16.8 V13.8" stroke-dasharray="0"/><path d="M7 6 V10.4 A3.1 3.1 0 0 0 13.2 10.4 V6"/></g></svg>
<svg class="b" style="left:18px;top:553.5px;" width="22" height="22" viewBox="0 0 22 22" fill="none"><g stroke="#4b4a58" stroke-width="1.6" stroke-linecap="round" stroke-linejoin="round"><circle cx="10.6" cy="10.6" r="9"/><path d="M7 14.4 V11.2 M10.6 14.4 V6.6 M14.2 14.4 V9.4"/></g></svg>
<svg class="b" style="left:18.5px;top:609.5px;" width="21" height="20" viewBox="0 0 21 20" fill="none"><g stroke="#4b4a58" stroke-width="1.5" stroke-linecap="round" stroke-linejoin="round"><rect x="1.6" y="1.6" width="16.8" height="16.4" rx="2"/><path d="M1.6 7.4 C3 9.4 5.8 9.4 7.2 7.4 C8.6 9.4 11.4 9.4 12.8 7.4 C14.2 9.4 17 9.4 18.4 7.4 M7.2 1.8 V7.4 M12.8 1.8 V7.4 M7 18 V13.4 A1 1 0 0 1 8 12.4 H12 A1 1 0 0 1 13 13.4 V18"/></g></svg>
<svg class="b" style="left:18.5px;top:663.5px;" width="20" height="20" viewBox="0 0 20 20" fill="none"><g stroke="#4b4a58" stroke-width="1.5" stroke-linecap="round" stroke-linejoin="round"><path d="M8.89 1.47 L11.11 1.47 L12.45 4.09 L13.89 4.92 L16.83 4.77 L17.94 6.70 L16.35 9.17 L16.35 10.83 L17.94 13.30 L16.83 15.23 L13.89 15.08 L12.45 15.91 L11.11 18.53 L8.89 18.53 L7.55 15.91 L6.11 15.08 L3.17 15.23 L2.06 13.30 L3.65 10.83 L3.65 9.17 L2.06 6.70 L3.17 4.77 L6.11 4.92 L7.55 4.09 Z"/><circle cx="10" cy="10" r="2.8"/></g></svg>
<svg class="b" style="left:17px;top:717.5px;" width="20" height="21" viewBox="0 0 20 21" fill="none"><g stroke="#4b4a58" stroke-width="1.5" stroke-linecap="round" stroke-linejoin="round"><path d="M3.6 6.6 H16 A1.8 1.8 0 0 1 17.8 8.4 V17.2 A1.8 1.8 0 0 1 16 19 H3.6 A1.8 1.8 0 0 1 1.8 17.2 V8.4 A1.8 1.8 0 0 1 3.6 6.6 Z M5.6 6.4 L12.6 1.8 L14.6 6.4"/><path d="M14 12.8 H14.2" stroke-width="2.2"/></g></svg>
<svg class="b" style="left:189px;top:122.5px;" width="12" height="9" viewBox="0 0 12 9" fill="none"><path d="M1.6 2 L6 6.6 L10.4 2" stroke="#4b4a58" stroke-width="1.7" stroke-linecap="round" stroke-linejoin="round"/></svg>
<svg class="b" style="left:191px;top:252.0px;" width="8" height="11" viewBox="0 0 8 11" fill="none"><path d="M1.6 1.4 L6 5.5 L1.6 9.6" stroke="#4b4a58" stroke-width="1.7" stroke-linecap="round" stroke-linejoin="round"/></svg>
<svg class="b" style="left:191px;top:425.5px;" width="8" height="11" viewBox="0 0 8 11" fill="none"><path d="M1.6 1.4 L6 5.5 L1.6 9.6" stroke="#4b4a58" stroke-width="1.7" stroke-linecap="round" stroke-linejoin="round"/></svg>
<svg class="b" style="left:191px;top:470.0px;" width="8" height="11" viewBox="0 0 8 11" fill="none"><path d="M1.6 1.4 L6 5.5 L1.6 9.6" stroke="#4b4a58" stroke-width="1.7" stroke-linecap="round" stroke-linejoin="round"/></svg>
<svg class="b" style="left:191px;top:515.0px;" width="8" height="11" viewBox="0 0 8 11" fill="none"><path d="M1.6 1.4 L6 5.5 L1.6 9.6" stroke="#4b4a58" stroke-width="1.7" stroke-linecap="round" stroke-linejoin="round"/></svg>
<svg class="b" style="left:191px;top:668.0px;" width="8" height="11" viewBox="0 0 8 11" fill="none"><path d="M1.6 1.4 L6 5.5 L1.6 9.6" stroke="#4b4a58" stroke-width="1.7" stroke-linecap="round" stroke-linejoin="round"/></svg>
<svg class="b" style="left:197.5px;top:15.5px;" width="13" height="18" viewBox="0 0 13 18" fill="none"><g stroke="#575664" stroke-width="1.5" stroke-linejoin="round" stroke-linecap="round"><path d="M3.4 1.2 H9.6 M4.4 1.2 V6.4 L1.6 10 V11.2 H11.4 V10 L8.6 6.4 V1.2 M6.5 11.4 V16.6"/></g></svg>
<div class="b" style="left:17.6px;top:764.8px;width:43px;height:43px;background:#4b31f0;border-radius:50%;box-shadow:0 0 9px rgba(150,150,165,.5);"></div>
<svg class="b" style="left:29px;top:775px;" width="21" height="24" viewBox="0 0 21 24" fill="none"><path d="M3.2 0.6 H17.8 A2.4 2.4 0 0 1 20.2 3 V22.4 L15.6 19.4 H3.2 A2.4 2.4 0 0 1 0.8 17 V3 A2.4 2.4 0 0 1 3.2 0.6 Z" fill="#fff"/><path d="M4.4 13.4 C7.4 16.2 13.2 16.2 16.2 13.4" stroke="#2b2560" stroke-width="1.4" stroke-linecap="round"/></svg>
<div class="b" style="left:0px;top:0px;width:1px;height:823px;background:#8b8a95;"></div>
<div class="b" style="left:1px;top:0px;width:3.5px;height:823px;background:rgba(255,255,255,.03);"></div>
<svg class="b" style="left:0px;top:817px;" width="6" height="6" viewBox="0 0 6 6" fill="none"><path d="M0 0 C0.4 3.6 2 5.6 5 6 H0 Z" fill="#222128"/></svg>
<svg class="b" style="left:10px;top:7px" width="112" height="38" viewBox="0 0 112 38" fill="none">
<defs>
<linearGradient id="lgU" x1="4" y1="20" x2="30" y2="12" gradientUnits="userSpaceOnUse"><stop offset="0" stop-color="#34378c"/><stop offset=".5" stop-color="#45359a"/><stop offset="1" stop-color="#72358a"/></linearGradient>
<linearGradient id="lgT" x1="8" y1="8" x2="12" y2="30" gradientUnits="userSpaceOnUse"><stop offset="0" stop-color="#3a5f9c"/><stop offset=".5" stop-color="#3a8a9a"/><stop offset="1" stop-color="#3c4a9a" stop-opacity="0"/></linearGradient>
<linearGradient id="lgS" x1="36" y1="0" x2="105" y2="0" gradientUnits="userSpaceOnUse"><stop offset="0" stop-color="#683c75"/><stop offset="1" stop-color="#3f3a83"/></linearGradient>
</defs>
<path d="M4.2 5.6 H14.4 V20.6 A3.45 3.45 0 0 0 21.3 20.6 V5.6 H30.2 V20.6 A13 13 0 0 1 4.2 20.6 Z" fill="url(#lgU)"/>
<path d="M6.6 9 H10.6 C9.6 14 9.8 20 11.6 25 C12.4 27.4 9.4 28.4 8.2 26 C6 21.4 5.6 14.6 6.6 9 Z" fill="url(#lgT)" opacity=".85"/>
<circle cx="29.8" cy="16.6" r="4.5" fill="#73717c"/>
<circle cx="29.8" cy="16.6" r="3.1" fill="#3b8f88"/>
<text x="36.6" y="25.5" font-family="'Liberation Sans',sans-serif" font-size="23" fill="url(#lgS)" stroke="url(#lgS)" stroke-width=".9" textLength="67.6" lengthAdjust="spacing">spacy</text>
</svg>
</body></html>
